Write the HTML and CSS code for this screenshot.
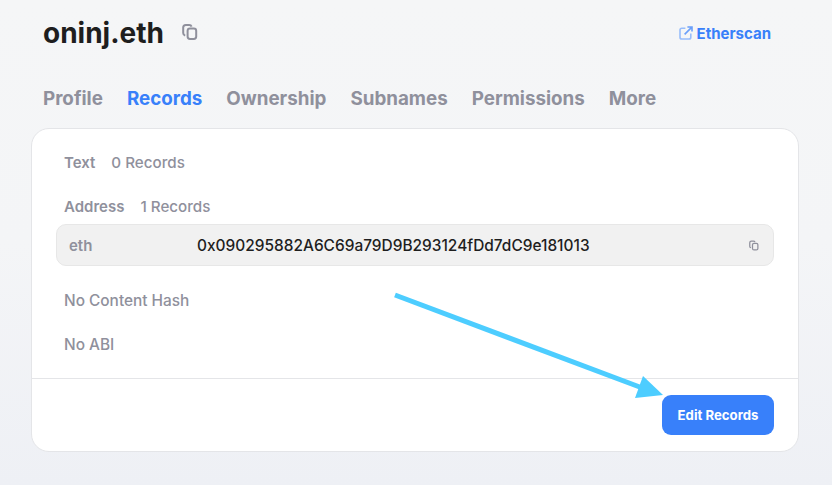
FILE: index.html
```html
<!DOCTYPE html>
<html lang="en">
<head>
  <meta charset="UTF-8">
  <meta name="viewport" content="width=device-width, initial-scale=1.0">
  <title>oninj.eth Records</title>
  <link rel="stylesheet" href="styles.css">
</head>
<body>
  <div class="page">
    <div class="header">
      <div class="name-wrap">
        <h1 class="name">oninj.eth</h1>
        <svg class="copy-icon copy-icon-lg" viewBox="0 0 16 16" fill="none">
          <path d="M3.2 11.6C1.9 11.2 1.2 10.3 1.2 9V3.6C1.2 2 2.2 1 3.8 1H7.2C8.4 1 9.2 1.5 9.6 2.6"/>
          <rect x="5.6" y="4.4" width="8.6" height="10.6" rx="2.4"/>
        </svg>
      </div>
      <a class="ext-link" href="#">
        <svg class="ext-icon" viewBox="0 0 14 14" fill="none">
          <path class="ext-box" d="M6.4 2.2H2.8C1.7 2.2 1 2.9 1 4V11.2C1 12.3 1.7 13 2.8 13H10C11.1 13 11.8 12.3 11.8 11.2V7.6"/>
          <path class="ext-arrow" d="M5.6 8.4L12.6 1.4M8.4 1H13V5.6"/>
        </svg>
        Etherscan
      </a>
    </div>

    <div class="tabs">
      <a href="#">Profile</a>
      <a href="#" class="active">Records</a>
      <a href="#">Ownership</a>
      <a href="#">Subnames</a>
      <a href="#">Permissions</a>
      <a href="#">More</a>
    </div>

    <div class="card">
      <div class="card-body">
        <div class="section-line"><b>Text</b><span>0 Records</span></div>
        <div class="section-line"><b>Address</b><span>1 Records</span></div>
        <div class="record">
          <span class="record-key">eth</span>
          <span class="record-value">0x090295882A6C69a79D9B293124fDd7dC9e181013</span>
          <svg class="copy-icon copy-icon-sm" viewBox="0 0 16 16" fill="none">
            <path d="M3.2 11.6C1.9 11.2 1.2 10.3 1.2 9V3.6C1.2 2 2.2 1 3.8 1H7.2C8.4 1 9.2 1.5 9.6 2.6"/>
            <rect x="5.6" y="4.4" width="8.6" height="10.6" rx="2.4"/>
          </svg>
        </div>
        <div class="section-line section-empty"><b>No Content Hash</b></div>
        <div class="section-line section-empty"><b>No ABI</b></div>
      </div>
      <div class="card-footer">
        <button class="button">Edit Records</button>
      </div>
    </div>
  </div>

  <!-- annotation arrow on top of the card -->
  <svg class="arrow" width="832" height="485" viewBox="0 0 832 485">
    <path class="arrow-line" d="M395 295L645 389"/>
    <path class="arrow-head" d="M643 376L663 395L635 398Z"/>
  </svg>
</body>
</html>
```

FILE: styles.css
```css
* {
  box-sizing: border-box;
}
html, body {
  height: 100%;
}
body {
  margin: 0;
  overflow: hidden;
  font-family: Inter, "Liberation Sans", sans-serif;
  background: linear-gradient(180deg, #f5f6f7 0%, #f4f5f7 50%, #eef0f5 100%);
}
.page {
  padding: 0 32px;
}
.header {
  height: 66px;
  display: flex;
  align-items: center;
  justify-content: space-between;
  padding: 0 29px 0 11px;
}
.name-wrap {
  display: flex;
  align-items: center;
  gap: 18px;
}
.name {
  margin: 0;
  font-size: 28px;
  font-weight: 700;
  color: #1e1e1e;
  line-height: 36px;
}
.copy-icon {
  stroke: #8f909c;
  stroke-width: 2;
}
.copy-icon-lg {
  width: 16px;
  height: 16px;
  margin-top: -2px;
}
.copy-icon-sm {
  width: 10px;
  height: 11px;
}
.ext-link {
  display: flex;
  align-items: center;
  gap: 4px;
  color: #3880fa;
  font-size: 15px;
  font-weight: 700;
  text-decoration: none;
}
.ext-icon {
  width: 14px;
  height: 14px;
}
.ext-box {
  stroke: #98bdfb;
  stroke-width: 1.6;
}
.ext-arrow {
  stroke: #6a9ffa;
  stroke-width: 1.6;
}
.tabs {
  height: 62px;
  display: flex;
  align-items: center;
  gap: 24px;
  padding: 2px 0 0 11px;
}
.tabs a {
  font-size: 18.8px;
  font-weight: 700;
  color: #8f909c;
  text-decoration: none;
}
.tabs a.active {
  color: #3880fa;
}
.card {
  width: 768px;
  height: 324px;
  margin-left: -1px;
  background-color: #fff;
  border: 1px solid #e4e5e8;
  border-radius: 18px;
  display: flex;
  flex-direction: column;
}
.card-body {
  flex-grow: 1;
  padding: 11px 24px 0;
}
.section-line {
  height: 44px;
  padding: 0 8px;
  display: flex;
  align-items: center;
  gap: 16px;
  font-size: 15px;
  color: #8f909c;
}
.section-line b {
  font-weight: 600;
}
.section-line span {
  font-weight: 500;
  font-size: 15.2px;
}
.section-empty b {
  font-weight: 500;
  font-size: 15.4px;
}
.record {
  height: 42px;
  margin: -4px 0 12px;
  padding: 0 14px 0 12px;
  display: flex;
  align-items: center;
  background-color: #f1f1f1;
  border: 1px solid #e7e7e7;
  border-radius: 10px;
}
.record-key {
  width: 128px;
  font-size: 15px;
  font-weight: 600;
  color: #8f909c;
}
.record-value {
  flex-grow: 1;
  font-size: 15.45px;
  font-weight: 500;
  color: #1e1e1e;
}
.card-footer {
  height: 73px;
  border-top: 1px solid #e4e5e8;
  padding: 16px 24px 0 0;
  display: flex;
  justify-content: flex-end;
  align-items: flex-start;
}
.button {
  width: 112px;
  height: 40px;
  padding: 0;
  background-color: #3880fa;
  color: white;
  border: none;
  border-radius: 9px;
  font-family: inherit;
  font-size: 13.2px;
  font-weight: 700;
  cursor: pointer;
}
.arrow {
  position: absolute;
  left: 0;
  top: 0;
  pointer-events: none;
}
.arrow-line {
  stroke: #4dcdff;
  stroke-width: 5;
  fill: none;
}
.arrow-head {
  fill: #4dcdff;
}
```
